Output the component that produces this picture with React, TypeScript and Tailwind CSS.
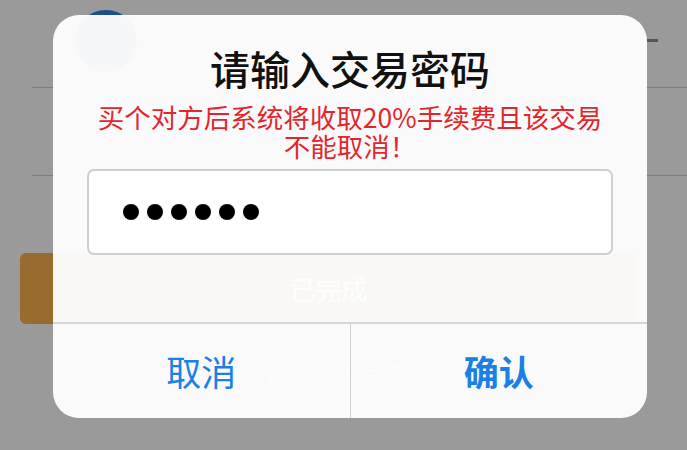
const font = { fontFamily: '"Noto Sans CJK SC", "Noto Sans", sans-serif' };

function BackgroundPage() {
  return (
    <div className="flex h-[450px] w-[687px] flex-col bg-[#9a9a9a]">
      <div className="ml-[32px] flex h-[88px] border-b border-[#7d7d7d]">
        <div className="ml-[43px] mt-[10px] h-[62px] w-[62px] rounded-full bg-[#1b4f8c]" />
        <div className="ml-auto mt-[39px] h-[3px] w-[11px] bg-[#555]" />
        <div className="w-[29px]" />
      </div>
      <div className="ml-[32px] h-[88px] border-b border-[#7d7d7d]" />
      <div className="ml-[20px] mr-[50px] mt-[77px] flex h-[71px] items-center justify-center rounded-md bg-[#9a6b2e] text-[26px] text-white">
        已完成
      </div>
      <div className="mt-[30px] text-center text-[24px] text-[#c9c9c9]">《手续费交易说明》</div>
    </div>
  );
}

function PasswordDialog() {
  return (
    <div className="absolute left-[53px] top-[15px] flex h-[403px] w-[594px] flex-col overflow-hidden rounded-[26px] bg-[#fdfdfd]/[0.97]">
      <div className="pt-[29px] text-center text-[40px] leading-[48px] font-medium text-[#111]">请输入交易密码</div>
      <div className="mx-[20px] mt-[10px] text-center text-[26.5px] leading-[29px] text-[#e3262c]">
        <div>买个对方后系统将收取20%手续费且该交易</div>
        <div>不能取消！</div>
      </div>
      <div className="mx-[34px] mt-[9px] flex h-[86px] items-center gap-[8px] rounded-[7px] border-2 border-[#cfcfcf] bg-white pl-[34px]">
        {[...Array(6)].map((_, i) => (
          <span key={i} className="h-[16px] w-[16px] rounded-full bg-black" />
        ))}
      </div>
      <div className="mt-auto flex h-[96px] border-t-2 border-[#d6d6d6]">
        <button className="flex flex-1 items-center justify-center text-[35px] text-[#1a80e4]">取消</button>
        <div className="w-px bg-[#d0d0d0]" />
        <button className="flex flex-1 items-center justify-center text-[35px] font-bold text-[#1a80e4]">确认</button>
      </div>
    </div>
  );
}

export default function App() {
  return (
    <div className="relative h-[450px] w-[687px] overflow-hidden" style={font}>
      <BackgroundPage />
      <PasswordDialog />
    </div>
  );
}
